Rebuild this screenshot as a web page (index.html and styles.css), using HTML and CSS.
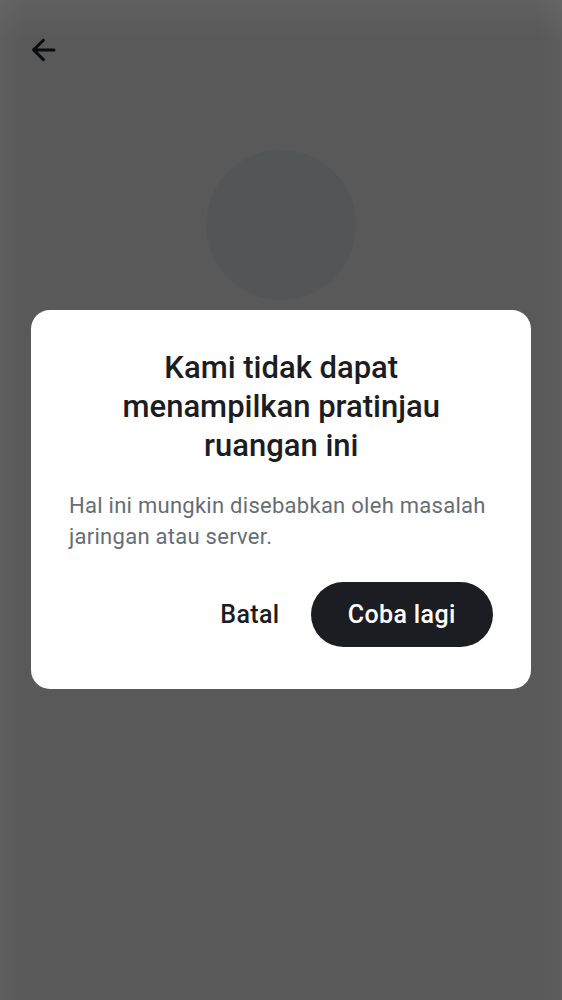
FILE: index.html
```html
<!DOCTYPE html>
<html lang="id">
<head>
<meta charset="utf-8">
<title>Pratinjau ruangan</title>
<link rel="stylesheet" href="styles.css">
</head>
<body>
<div class="screen">
  <header class="topbar">
    <svg class="back" viewBox="0 0 26 26" aria-label="Kembali"><path d="M23 12.9H3M12.4 3.2L2.6 12.9L12.4 22.6"/></svg>
  </header>
  <div class="avatar"></div>
  <section class="dialog" role="dialog">
    <h1 class="title">Kami tidak dapat<br>menampilkan pratinjau<br>ruangan ini</h1>
    <p class="message">Hal ini mungkin disebabkan oleh masalah<br>jaringan atau server.</p>
    <div class="actions">
      <button class="button">Batal</button>
      <button class="button primary">Coba lagi</button>
    </div>
  </section>
</div>
</body>
</html>
```
FILE: styles.css
```css
* { box-sizing: border-box; }
body { margin: 0; font-family: Roboto, sans-serif; }
.screen {
  height: 1000px;
  display: flex;
  flex-direction: column;
  align-items: center;
  background:
    linear-gradient(to bottom, rgba(255, 255, 255, 0.045), transparent 38px),
    linear-gradient(to right, rgba(255, 255, 255, 0.03), transparent 26px, transparent calc(100% - 26px), rgba(255, 255, 255, 0.03)),
    #595959;
}
.topbar { width: 100%; height: 150px; padding: 37px 31px; }
.back { display: block; width: 26px; height: 26px; fill: none; stroke: #0b0c0e; stroke-width: 3; stroke-linecap: round; stroke-linejoin: round; }
.avatar { width: 150px; height: 150px; border-radius: 50%; background: #545557; }
.dialog {
  width: 500px;
  height: 379.4px;
  margin-top: 10px;
  padding: 38px 38px 37px;
  border-radius: 19px;
  background: #fff;
}
.title { margin: 0; padding-left: 0.5px; font-size: 31px; line-height: 39px; font-weight: 500; text-align: center; color: #1b1d22; white-space: nowrap; }
.message { margin: 25px 0 0; font-size: 22px; line-height: 31px; letter-spacing: 0.27px; color: #656d77; white-space: nowrap; }
.actions { display: flex; justify-content: flex-end; margin-top: 30px; }
.button { height: 65px; padding: 0 31px 0 32px; border: 0; border-radius: 33px; background: none; font: 500 25px Roboto, sans-serif; letter-spacing: 0.35px; color: #1b1d22; white-space: nowrap; }
.primary { width: 182.5px; padding: 0; background: #1b1d22; color: #fff; }
```
